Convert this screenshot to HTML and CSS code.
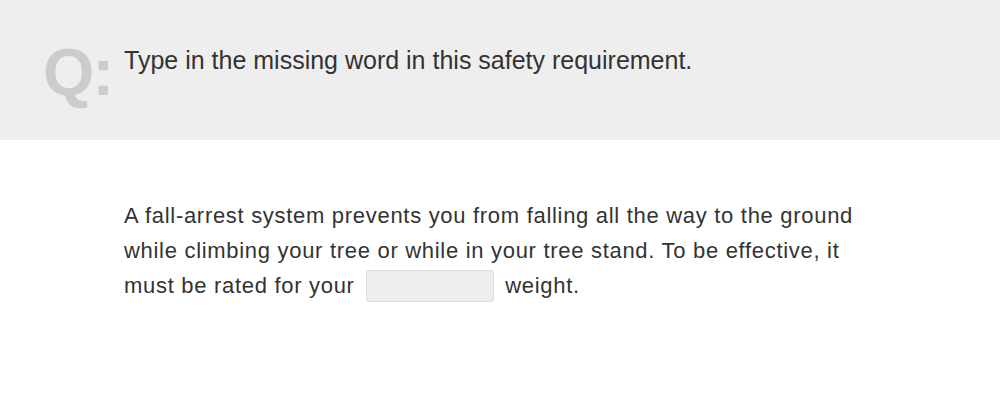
FILE: index.html
```html
<!DOCTYPE html>
<html>
<head>
<meta charset="utf-8">
<link rel="stylesheet" href="styles.css">
</head>
<body>
<div class="question">
  <div class="q-mark">Q:</div>
  <div class="q-text">Type in the missing word in this safety requirement.</div>
</div>
<div class="content">
  <p class="passage">A fall-arrest system prevents you from falling all the way to the ground while climbing your tree or while in your tree stand. To be effective, it must be rated for your <input class="blank" type="text" aria-label="missing word"> weight.</p>
</div>
</body>
</html>
```

FILE: styles.css
```css
html, body {
  margin: 0;
  padding: 0;
  background: #ffffff;
  font-family: "Liberation Sans", Arial, sans-serif;
}
.question {
  background: #eeeeee;
  height: 140px;
  display: flex;
  align-items: flex-start;
  box-sizing: border-box;
  padding: 39px 0 0 43px;
}
.q-mark {
  font-size: 66px;
  font-weight: bold;
  color: #cccccc;
  line-height: 1;
  width: 81px;
  letter-spacing: -2px;
}
.q-text {
  font-size: 25px;
  color: #333333;
  line-height: 1;
  padding-top: 9px;
}
.content {
  padding: 58px 0 0 124px;
}
.passage {
  margin: 0;
  width: 760px;
  font-size: 22px;
  letter-spacing: 0.7px;
  line-height: 35px;
  color: #333333;
}
.blank {
  box-sizing: border-box;
  width: 128px;
  height: 32px;
  margin: 0 4px 0 5px;
  border: 1px solid #dddddd;
  border-radius: 3px;
  background: #eeeeee;
  vertical-align: 3px;
  padding: 0;
}
```
